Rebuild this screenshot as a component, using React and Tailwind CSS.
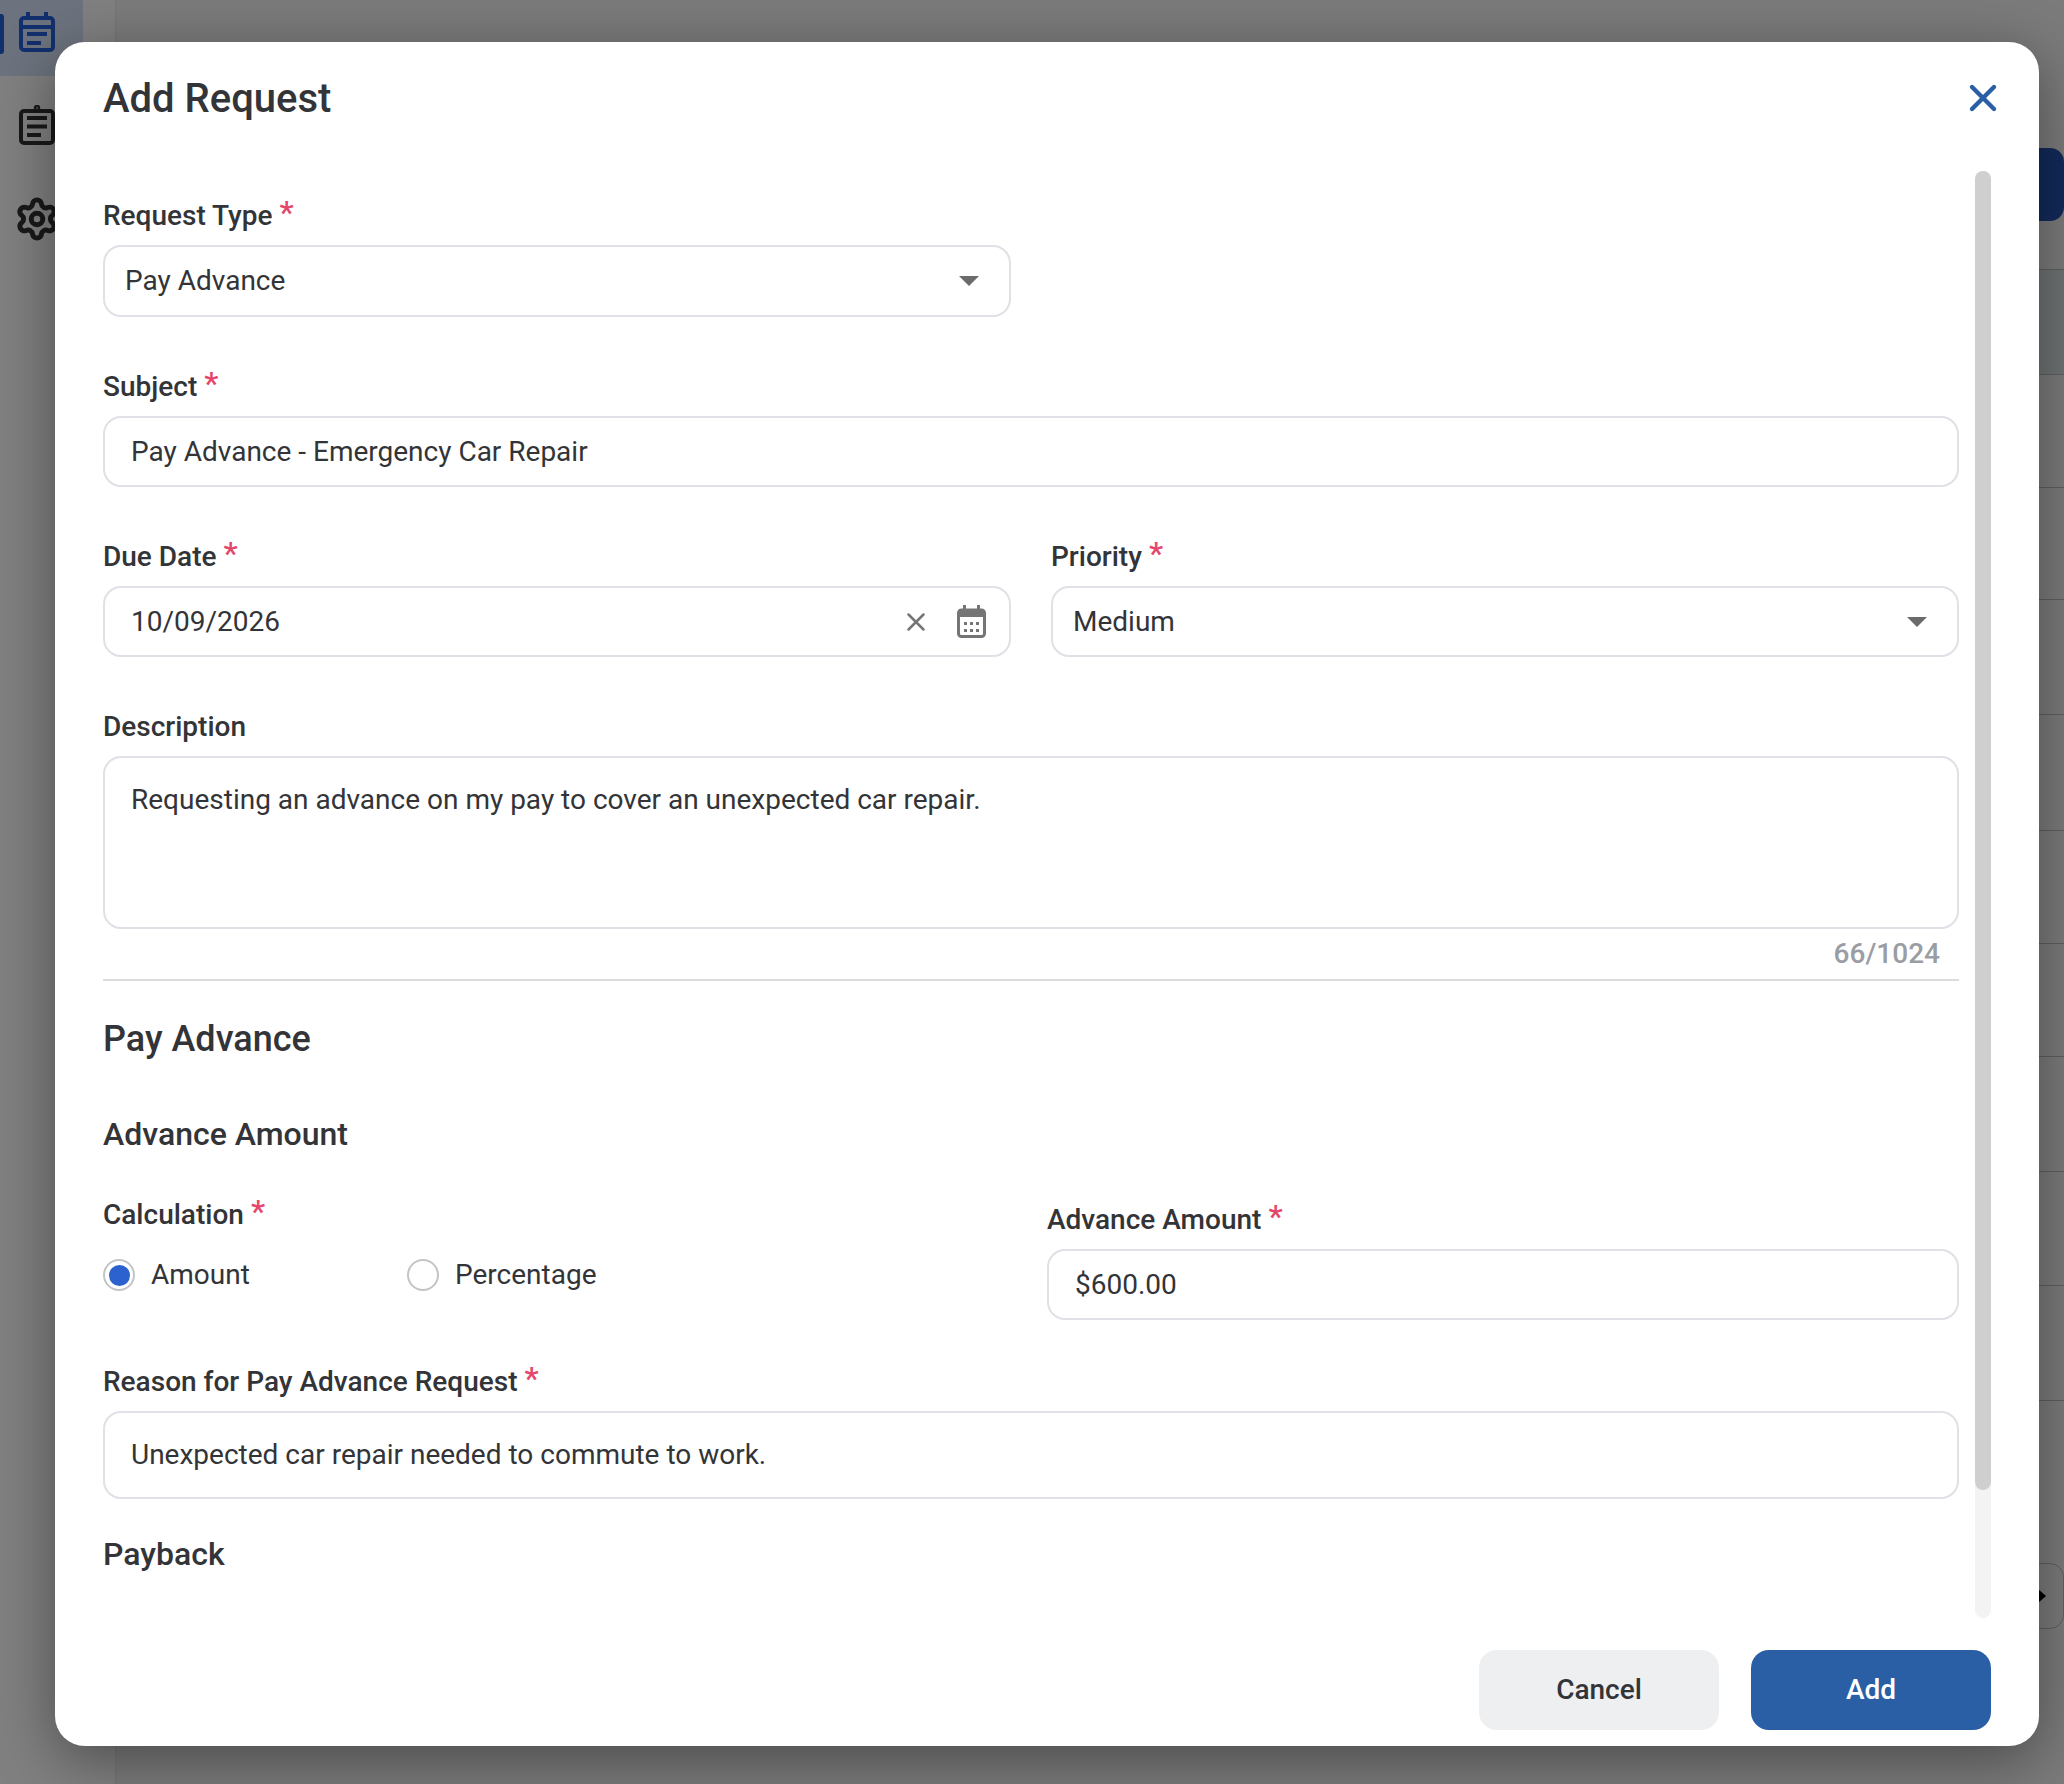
import { X, Settings } from "lucide-react";

const rowHeights = [105, 113, 112, 115, 116, 113, 113, 115, 114, 115, 112];

// little required star sitting next to a label
function Star() {
  return <span className="relative -top-[4px] ml-[7px] text-[32px] leading-none text-[#e4476b]">*</span>;
}

function FieldLabel({ children, required }) {
  return (
    <div className="flex h-[40px] items-center text-[28px] font-medium leading-none text-[#333438]">
      {children}
      {required && <Star />}
    </div>
  );
}

function Caret() {
  return (
    <svg width="20" height="10" viewBox="0 0 20 10" className="shrink-0">
      <path d="M0 0h20L10 10z" fill="#6b6b6b" />
    </svg>
  );
}

function SelectBox({ value, className = "h-[71px]" }) {
  return (
    <div className={`mt-[9px] flex items-center justify-between rounded-[18px] border-2 border-[#e0e0e6] pl-[20px] pr-[30px] text-[28px] text-[#333438] ${className}`}>
      <span>{value}</span>
      <Caret />
    </div>
  );
}

function TextBox({ value, className = "h-[71px]" }) {
  return (
    <div className={`mt-[9px] flex items-center rounded-[18px] border-2 border-[#e0e0e6] pl-[26px] text-[28px] text-[#333438] ${className}`}>
      {value}
    </div>
  );
}

function DateIcon() {
  return (
    <svg width="29" height="33" viewBox="0 0 29 33" className="shrink-0">
      <rect x="1.5" y="5" width="26" height="26.5" rx="3" fill="none" stroke="#757575" strokeWidth="3" />
      <path d="M2 5h25v7H2zM6 0h3v5H6zM20 0h3v5h-3z" fill="#757575" />
      <path d="M7 17h3v3H7zM13 17h3v3h-3zM19 17h3v3h-3zM7 24h3v3H7zM13 24h3v3h-3zM19 24h3v3h-3z" fill="#757575" />
    </svg>
  );
}

function Radio({ checked, label, className = "" }) {
  return (
    <div className={`flex items-center gap-[16px] ${className}`}>
      <div className="flex h-[32px] w-[32px] items-center justify-center rounded-full border-2 border-[#c4c4c8]">
        {checked && <div className="h-[21px] w-[21px] rounded-full bg-[#2b62cf]" />}
      </div>
      <span className="text-[28px] text-[#333438]">{label}</span>
    </div>
  );
}

function Sidebar() {
  return (
    <div className="flex w-[116px] shrink-0 flex-col border-r border-[#747574] bg-[#7f807f]">
      <div className="flex h-[76px] w-[83px] items-start bg-[#6d737e] pt-[12px]">
        <div className="mt-[2px] h-[40px] w-[4px] rounded-r-[3px] bg-[#12306e]" />
        <svg width="36" height="40" viewBox="0 0 36 40" className="ml-[15px]" fill="none" stroke="#12306e" strokeWidth="4">
          <rect x="2" y="6" width="32" height="32" rx="3" />
          <path d="M2 15h32M9 0v6M27 0v6M8 22h20M8 31h14" />
        </svg>
      </div>
      <svg width="36" height="40" viewBox="0 0 36 40" className="ml-[19px] mt-[29px]" fill="none" stroke="#191919" strokeWidth="4">
        <rect x="2" y="6" width="32" height="32" rx="3" />
        <circle cx="18" cy="3" r="2" strokeWidth="2.5" />
        <path d="M8 13h20M8 21.5h20M8 30h14" />
      </svg>
      <Settings size={46} color="#191919" strokeWidth={2.6} className="ml-[14px] mt-[51px]" />
    </div>
  );
}

export default function App() {
  return (
    <div className="relative h-[1784px] w-[2064px] overflow-hidden bg-[#7a7b7a] font-['Roboto',sans-serif]">
      {/* page behind the dialog */}
      <div className="flex h-full">
        <Sidebar />
        <div className="flex flex-1 flex-col">
          <div className="flex h-[269px] items-start justify-end pt-[148px]">
            <div className="h-[73px] w-[120px] rounded-[14px] bg-[#122a5a]" />
          </div>
          {rowHeights.map((h, i) => (
            <div
              key={i}
              style={{ height: h }}
              className={`border-t border-[#5f5f5f] ${i === 0 ? "bg-[#6f7374]" : ""}`}
            />
          ))}
          <div className="mt-[51px] flex h-[66px] items-center rounded-[14px] border border-[#5f5f5f] pl-[1921px]">
            <div className="h-0 w-0 border-y-[7px] border-l-[8px] border-y-transparent border-l-black" />
          </div>
        </div>
      </div>

      {/* dialog */}
      <div className="absolute inset-0">
        <div className="ml-[55px] mt-[42px] flex h-[1704px] w-[1984px] flex-col rounded-[30px] bg-white pl-[48px] pr-[48px] shadow-[0_14px_60px_rgba(0,0,0,0.4)]">
          <div className="flex h-[129px] shrink-0 items-start justify-between">
            <h1 className="mt-[33px] text-[40px] font-medium leading-[48px] text-[#333438]">Add Request</h1>
            <X size={44} color="#2a5fa5" strokeWidth={2.4} className="mt-[34px] -mr-[14px]" />
          </div>

          <div className="flex h-[1447px] shrink-0 gap-[16px]">
            <div className="w-[1856px] overflow-hidden pt-[25px]">
              <FieldLabel required>Request Type</FieldLabel>
              <div className="w-[908px]">
                <SelectBox value="Pay Advance" className="h-[72px]" />
              </div>

              <div className="mt-[50px]">
                <FieldLabel required>Subject</FieldLabel>
                <TextBox value="Pay Advance - Emergency Car Repair" />
              </div>

              <div className="mt-[50px] flex gap-[40px]">
                <div className="w-[908px]">
                  <FieldLabel required>Due Date</FieldLabel>
                  <div className="mt-[9px] flex h-[71px] items-center rounded-[18px] border-2 border-[#e0e0e6] pl-[26px] pr-[23px] text-[28px] text-[#333438]">
                    <span className="flex-1">10/09/2026</span>
                    <X size={30} color="#757575" strokeWidth={2} className="mr-[26px]" />
                    <DateIcon />
                  </div>
                </div>
                <div className="w-[908px]">
                  <FieldLabel required>Priority</FieldLabel>
                  <SelectBox value="Medium" />
                </div>
              </div>

              <div className="mt-[50px]">
                <FieldLabel>Description</FieldLabel>
                <div className="mt-[9px] h-[173px] rounded-[18px] border-2 border-[#e0e0e6] pl-[26px] pt-[22px] text-[28px] leading-[40px] text-[#333438]">
                  Requesting an advance on my pay to cover an unexpected car repair.
                </div>
                <div className="flex h-[50px] items-center justify-end pr-[19px] text-[28px] font-medium text-[#9a9da3]">66/1024</div>
              </div>

              <div className="border-t-2 border-[#dcdcdc]" />

              <h2 className="mt-[34px] text-[36px] font-medium leading-[48px] text-[#333438]">Pay Advance</h2>
              <h3 className="mt-[51px] text-[32px] font-medium leading-[40px] text-[#333438]">Advance Amount</h3>

              <div className="mt-[41px] flex gap-[33px]">
                <div className="w-[911px]">
                  <FieldLabel required>Calculation</FieldLabel>
                  <div className="mt-[19px] flex">
                    <Radio checked label="Amount" className="w-[304px]" />
                    <Radio label="Percentage" />
                  </div>
                </div>
                <div className="mt-[5px] w-[912px]">
                  <FieldLabel required>Advance Amount</FieldLabel>
                  <TextBox value="$600.00" />
                </div>
              </div>

              <div className="mt-[42px]">
                <FieldLabel required>Reason for Pay Advance Request</FieldLabel>
                <TextBox value="Unexpected car repair needed to commute to work." className="h-[88px]" />
              </div>

              <h3 className="mt-[35px] text-[32px] font-medium leading-[40px] text-[#333438]">Payback</h3>
            </div>

            {/* scrollbar */}
            <div className="h-full w-[16px] rounded-full bg-[#f3f3f3]">
              <div className="h-[1319px] rounded-full bg-[#cfcfcf]" />
            </div>
          </div>

          <div className="mt-[32px] flex justify-end gap-[32px]">
            <button className="h-[80px] w-[240px] rounded-[18px] bg-[#eeeff1] text-[28px] font-medium text-[#333438]">Cancel</button>
            <button className="h-[80px] w-[240px] rounded-[18px] bg-[#2a5fa5] text-[28px] font-medium text-white">Add</button>
          </div>
        </div>
      </div>
    </div>
  );
}
